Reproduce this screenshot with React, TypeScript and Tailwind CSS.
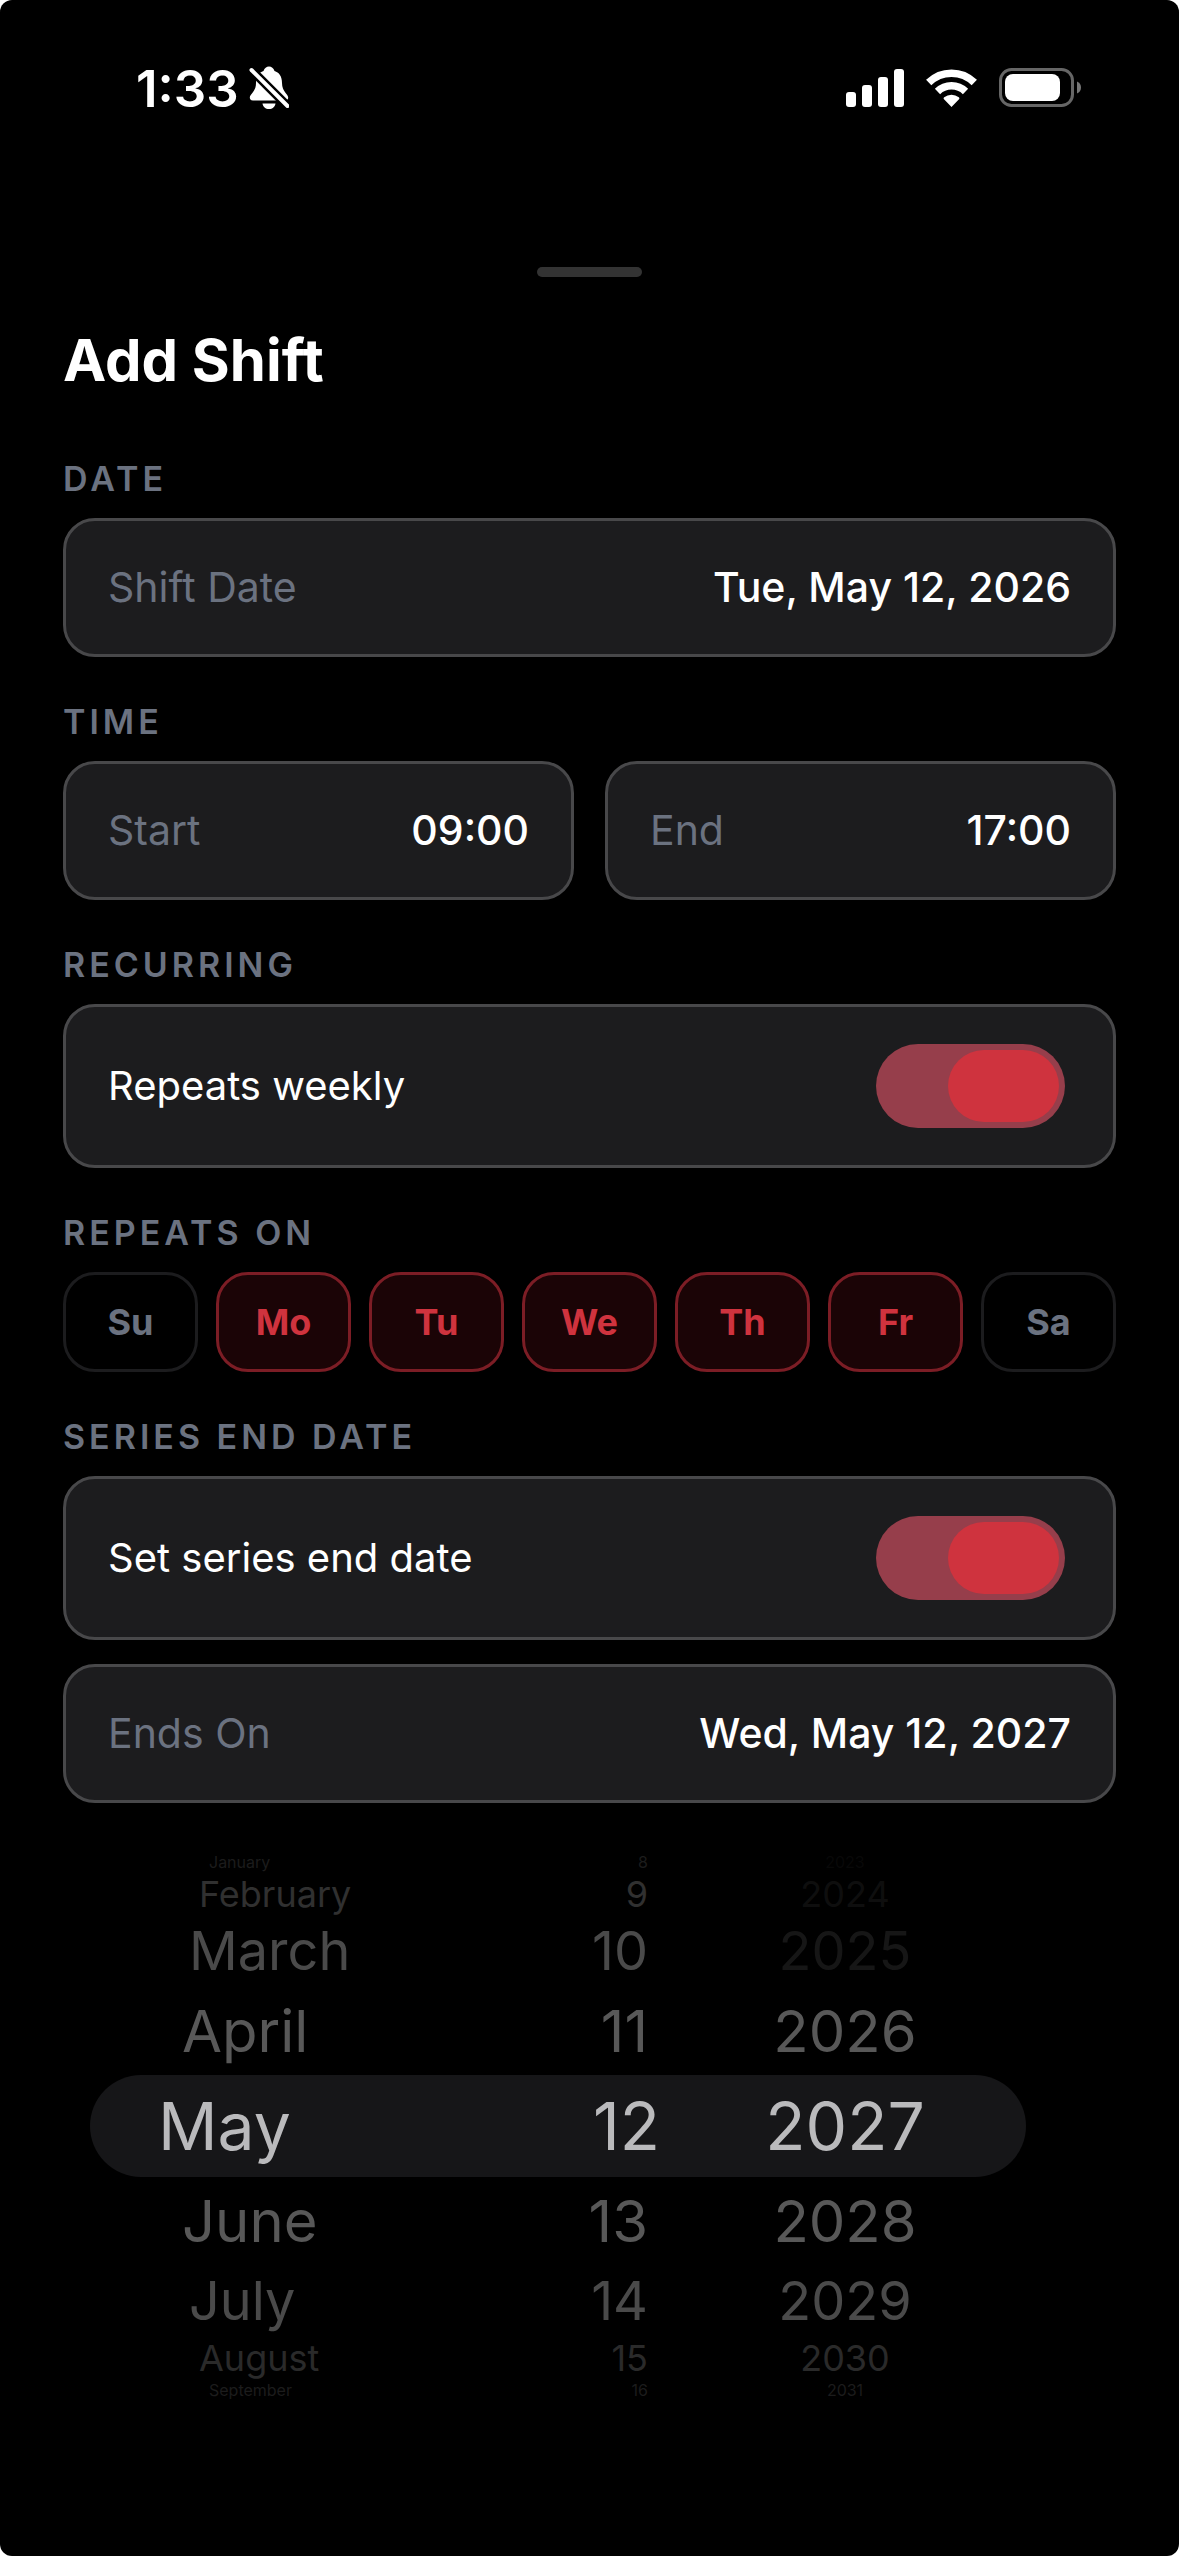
import { useState } from "react";
import clsx from "clsx";

const DAYS = ["Su", "Mo", "Tu", "We", "Th", "Fr", "Sa"];

/** Picker rows, dimmer and smaller the further they sit from the selected one. */
const WHEEL = [
  { month: "January", day: 8, year: 2023, row: "h-[22px] text-[16px] text-[#1c1c1c]", indent: "pl-[119px]", past: true },
  { month: "February", day: 9, year: 2024, row: "h-[42px] text-[36px] text-[#303030]", indent: "pl-[109px]", past: true },
  { month: "March", day: 10, year: 2025, row: "h-[72px] text-[54px] text-[#4a4a4a]", indent: "pl-[99px]", past: true },
  { month: "April", day: 11, year: 2026, row: "h-[88px] text-[58px] text-[#585858]", indent: "pl-[92px]" },
  { month: "May", day: 12, year: 2027, row: "h-[102px] text-[66px] text-[#bababc] bg-[#161618]", indent: "pl-[68px]", selected: true },
  { month: "June", day: 13, year: 2028, row: "h-[88px] text-[58px] text-[#585858]", indent: "pl-[92px]" },
  { month: "July", day: 14, year: 2029, row: "h-[72px] text-[54px] text-[#4a4a4a]", indent: "pl-[99px]" },
  { month: "August", day: 15, year: 2030, row: "h-[42px] text-[36px] text-[#2a2a2a]", indent: "pl-[109px]" },
  { month: "September", day: 16, year: 2031, row: "h-[22px] text-[16px] text-[#1c1c1c]", indent: "pl-[119px]" },
];

function StatusBar() {
  return (
    <header className="h-[176px] pl-[136px] pr-[98px] flex items-center justify-between">
      <div className="flex items-center gap-[10px]">
        <span className="text-[51px] leading-none font-semibold">1:33</span>
        <svg width="40" height="44" viewBox="0 0 40 44" aria-label="Silent mode">
          <path
            fill="#fff"
            d="M4 34.5C1.5 34.5.8 33 .8 31.5.8 28 7 26 7 17 7 10 10 6.5 14.5 5 15.5 2 17.5.5 20 .5S24.500 2 25.500 5C30 6.500 33 10 33 17c0 9 6.200 11 6.200 14.500 0 1.500-.7 3-3.200 3zM13.500 37.500h13c-.5 3.500-3 5.500-6.500 5.500s-6-2-6.500-5.500z"
          />
          <path stroke="#000" strokeWidth="9" d="M0 1.500 40 41.500" />
          <path stroke="#fff" strokeWidth="4" strokeLinecap="round" d="M2.500 4 38.500 40" />
        </svg>
      </div>
      <div className="flex items-center gap-[22px]">
        <svg width="58" height="38" viewBox="0 0 58 38" fill="#fff" aria-label="Signal">
          <rect x="0" y="23" width="10" height="15" rx="3" />
          <rect x="16" y="16" width="10" height="22" rx="3" />
          <rect x="32" y="8" width="10" height="30" rx="3" />
          <rect x="48" y="0" width="10" height="38" rx="3" />
        </svg>
        <svg width="51" height="38" viewBox="0 0 51 38" fill="none" stroke="#fff" strokeWidth="7.500" aria-label="Wi-Fi">
          <path d="M2.700 13.500a32.500 32.500 0 0 1 45.600 0" />
          <path d="M11.500 22.500a20 20 0 0 1 28 0" />
          <path fill="#fff" stroke="none" d="M25.500 38 18 30.300c-.6-.7-.5-1.500.2-2a11.500 11.500 0 0 1 14.600 0c.7.500.8 1.300.2 2z" />
        </svg>
        <svg width="82" height="40" viewBox="0 0 82 40" aria-label="Battery">
          <rect x="1.500" y="1.500" width="72" height="36" rx="11" fill="none" stroke="#666" strokeWidth="3" />
          <rect x="6" y="6" width="55" height="27" rx="8" fill="#fff" />
          <path fill="#777" d="M78 13.500c2.500 1 4 3.300 4 6s-1.500 5-4 6z" />
        </svg>
      </div>
    </header>
  );
}

function SectionLabel({ children }: { children: string }) {
  return (
    <h2 className="mt-[45px] mb-[19px] text-[34px] leading-[40px] font-semibold tracking-[4px] uppercase text-[#6b7280]">
      {children}
    </h2>
  );
}

function FieldButton({ label, value }: { label: string; value: string }) {
  return (
    <button
      type="button"
      className="w-full h-[139px] px-[42px] flex items-center justify-between rounded-[32px] border-3 border-[#48484a] bg-[#1c1c1e] text-[41px]"
    >
      <span className="text-[#6b7280]">{label}</span>
      <span className="font-medium">{value}</span>
    </button>
  );
}

function ToggleRow({ id, label }: { id: string; label: string }) {
  const [on, setOn] = useState(true);
  return (
    <div className="h-[164px] pl-[42px] pr-12 flex items-center justify-between rounded-[32px] border-3 border-[#48484a] bg-[#1c1c1e] text-[40px]">
      <label htmlFor={id}>{label}</label>
      <input
        id={id}
        type="checkbox"
        role="switch"
        checked={on}
        onChange={() => setOn(!on)}
        className="appearance-none w-[189px] h-[84px] p-[6px] flex rounded-full bg-[#39393d] checked:justify-end checked:bg-[#963e4b] before:content-[''] before:w-[111px] before:h-full before:rounded-full before:bg-white checked:before:bg-[#cf333e]"
      />
    </div>
  );
}

function DateWheel() {
  return (
    <div className="mt-12 ml-[27px] mr-[90px]" role="group" aria-label="Series end date">
      {WHEEL.map(({ month, day, year, row, indent, selected, past }) => (
        <div
          key={month}
          className={clsx("grid grid-cols-[300fr_270fr_366fr] items-center rounded-full leading-none", row)}
        >
          <button type="button" className={clsx("text-left", indent)}>
            {month}
          </button>
          <button type="button" className={clsx("text-right", !selected && "pr-3")}>
            {day}
          </button>
          <button type="button" className={clsx("text-center pl-1", past && "opacity-30")}>
            {year}
          </button>
        </div>
      ))}
    </div>
  );
}

export default function App() {
  const [repeatDays, setRepeatDays] = useState(["Mo", "Tu", "We", "Th", "Fr"]);

  const toggleDay = (day: string) =>
    setRepeatDays((prev) => (prev.includes(day) ? prev.filter((d) => d !== day) : [...prev, day]));

  return (
    <div className="min-h-screen rounded-xl bg-black text-white font-['Inter',sans-serif]">
      <StatusBar />

      <main className="px-[63px] pt-[91px] pb-16">
        {/* Sheet handle */}
        <div className="mx-auto h-[10px] w-[105px] rounded-full bg-[#333333]" />

        <h1 className="mt-[47px] pb-[18px] text-[58px] leading-[72px] font-bold">Add Shift</h1>

        <SectionLabel>Date</SectionLabel>
        <FieldButton label="Shift Date" value="Tue, May 12, 2026" />

        <SectionLabel>Time</SectionLabel>
        <div className="grid grid-cols-2 gap-[31px]">
          <FieldButton label="Start" value="09:00" />
          <FieldButton label="End" value="17:00" />
        </div>

        <SectionLabel>Recurring</SectionLabel>
        <ToggleRow id="repeats-weekly" label="Repeats weekly" />

        <SectionLabel>Repeats on</SectionLabel>
        <div className="grid grid-cols-7 gap-[18px]">
          {DAYS.map((day) => {
            const active = repeatDays.includes(day);
            return (
              <button
                key={day}
                type="button"
                aria-pressed={active}
                onClick={() => toggleDay(day)}
                className={clsx(
                  "h-[100px] rounded-[32px] border-3 text-[36px] font-bold",
                  active ? "border-[#7c1d25] bg-[#1b0406] text-[#cf333e]" : "border-[#1c1c1e] text-[#6b7280]"
                )}
              >
                {day}
              </button>
            );
          })}
        </div>

        <SectionLabel>Series end date</SectionLabel>
        <div className="space-y-6">
          <ToggleRow id="series-end" label="Set series end date" />
          <FieldButton label="Ends On" value="Wed, May 12, 2027" />
        </div>

        <DateWheel />
      </main>
    </div>
  );
}
